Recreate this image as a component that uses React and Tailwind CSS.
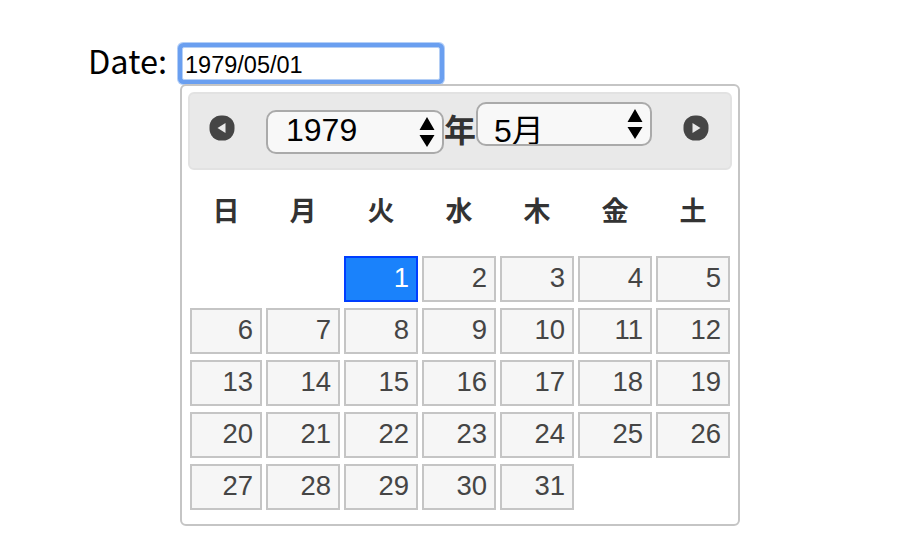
const sans = "font-['Liberation_Sans','Noto_Sans_CJK_JP',sans-serif]";

function Arrow({ dir }) {
  return (
    <svg width="26" height="26" viewBox="0 0 26 26" aria-hidden="true" className="blur-[0.5px]">
      <rect x="0.5" y="0.5" width="25" height="25" rx="11.5" fill="#454545" />
      {dir === "left" ? (
        <path d="M16.5 8v10l-8-5z" fill="#e9e9e9" />
      ) : (
        <path d="M9.5 8v10l8-5z" fill="#e9e9e9" />
      )}
    </svg>
  );
}

function SelectBox({ value, options, className, selectClass }) {
  return (
    <div className={`relative h-[44px] shrink-0 ${className}`}>
      <select
        defaultValue={value}
        className={`block h-full w-full appearance-none rounded-[10px] border-2 border-[#aaaaaa] bg-[#f8f8f8] text-black outline-none ${selectClass}`}
      >
        {options.map((o) => (
          <option key={o}>{o}</option>
        ))}
      </select>
      <svg
        width="16"
        height="30"
        viewBox="0 0 16 30"
        className="pointer-events-none absolute right-[9px] top-[7px]"
        aria-hidden="true"
      >
        <path d="M8 0l7.5 13H.5zM8 30L.5 18h15z" fill="#000" />
      </svg>
    </div>
  );
}

const weekdays = ["日", "月", "火", "水", "木", "金", "土"];
const days = Array.from({ length: 31 }, (_, i) => i + 1);

export default function App() {
  return (
    <div className={`h-[560px] w-[924px] overflow-hidden bg-white pt-[44px] ${sans}`}>
      <div className="flex items-start pl-[88px]">
        <label className="w-[94px] shrink-0 font-['Noto_Sans_CJK_JP',sans-serif] text-[32.5px] leading-[32px] text-black">
          Date:
        </label>
        <input
          readOnly
          value="1979/05/01"
          className="mt-[3px] block h-[33px] w-[258px] rounded-[2px] border border-[#b5cff5] bg-white pl-[2px] pt-[4px] text-[23.5px] text-black shadow-[0_0_0_4px_#6a9ff0,0_0_0_5px_#b4cff7] outline-none"
        />
      </div>
      <div className="relative ml-[180px] mt-[4px] h-[442px] w-[560px] rounded-[6px] border-2 border-[#c5c5c5] bg-white p-[6px]">
        <div className="flex h-[78px] w-[544px] items-start rounded-[6px] border-2 border-[#e2e2e2] bg-[#e9e9e9] pl-[19px]">
          <div className="mt-[21px] mr-[31px] shrink-0">
            <Arrow dir="left" />
          </div>
          <SelectBox
            value="1979"
            options={["1979"]}
            className="mt-[16px] w-[178px]"
            selectClass="pl-[18px] pb-[5px] text-[32px] leading-[36px]"
          />
          <span className="mt-[15px] w-[32px] shrink-0 text-center text-[32px] font-semibold leading-[44px] text-[#333333]">
            年
          </span>
          <SelectBox
            value="5月"
            options={["5月"]}
            className="mt-[8px] w-[176px]"
            selectClass="pl-[16px] pt-[9px] text-[32px] leading-[36px]"
          />
          <div className="ml-[31px] mt-[21px] shrink-0">
            <Arrow dir="right" />
          </div>
        </div>
        <div className="ml-[2px] mt-[24px] grid w-[540px] grid-cols-[72px_repeat(6,74px)] gap-x-[4px]">
          {weekdays.map((d) => (
            <div key={d} className="h-[36px] text-center text-[27px] font-bold leading-[36px] text-[#333333]">
              {d}
            </div>
          ))}
        </div>
        <div className="ml-[2px] mt-[26px] grid w-[540px] grid-cols-[72px_repeat(6,74px)] grid-rows-[repeat(5,46px)] gap-x-[4px] gap-y-[6px]">
          <div className="col-span-2" />
          {days.map((d) => (
            <div
              key={d}
              className={
                d === 1
                  ? "border-2 border-[#003eff] bg-[#1a82fb] pr-[7px] text-right text-[27.5px] leading-[40px] text-white"
                  : "border-2 border-[#c5c5c5] bg-[#f6f6f6] pr-[7px] text-right text-[27.5px] leading-[40px] text-[#454545]"
              }
            >
              {d}
            </div>
          ))}
        </div>
      </div>
    </div>
  );
}
